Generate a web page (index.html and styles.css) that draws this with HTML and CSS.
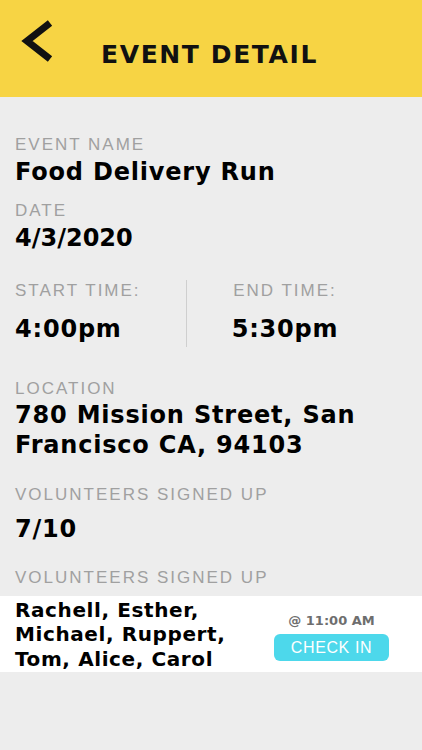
FILE: index.html
```html
<!DOCTYPE html>
<html lang="en">
<head>
    <meta charset="UTF-8">
    <meta name="viewport" content="width=device-width, initial-scale=1.0">
    <title>Event Detail</title>
    <link rel="stylesheet" href="styles.css">
</head>
<body>
    <!-- Header -->
    <div class="header">
        <div class="back">
            <svg width="40" height="46" viewBox="0 0 40 46">
                <polyline points="34,5 11,23 34,41" fill="none" stroke="#111" stroke-width="7" stroke-linejoin="miter"/>
            </svg>
        </div>
        <h1>EVENT DETAIL</h1>
        <div class="spacer"></div>
    </div>

    <main class="details">
        <div class="field field-name">
            <div class="label">EVENT NAME</div>
            <div class="value">Food Delivery Run</div>
        </div>

        <div class="field field-date">
            <div class="label">DATE</div>
            <div class="value value-date">4/3/2020</div>
        </div>

        <!-- Start / end time -->
        <div class="time-row">
            <div class="time-col">
                <div class="label">START TIME:</div>
                <div class="value">4:00pm</div>
            </div>
            <div class="divider"></div>
            <div class="time-col end">
                <div class="label">END TIME:</div>
                <div class="value">5:30pm</div>
            </div>
        </div>

        <div class="field field-location">
            <div class="label">LOCATION</div>
            <div class="value">780 Mission Street, San Francisco CA, 94103</div>
        </div>

        <div class="field field-count">
            <div class="label">VOLUNTEERS SIGNED UP</div>
            <div class="value">7/10</div>
        </div>

        <div class="label label-list">VOLUNTEERS SIGNED UP</div>
    </main>

    <div class="volunteer">
        <div class="names">Rachell, Esther, Michael, Ruppert, Tom, Alice, Carol</div>
        <div class="checkin">
            <div class="checkin-time">@ 11:00 AM</div>
            <div class="checkin-btn">CHECK IN</div>
        </div>
    </div>
</body>
</html>
```

FILE: styles.css
```css
/* General Styles */
body {
    margin: 0;
    padding: 0;
    background-color: #ededed;
    font-family: 'Liberation Sans', Arial, sans-serif;
    color: #000;
    height: 750px;
    overflow: hidden;
}

/* Header */
.header {
    display: flex;
    align-items: flex-start;
    height: 97px;
    background-color: #f7d444;
}

.back {
    width: 56px;
    padding: 18px 0 0 16px;
    box-sizing: border-box;
}

.back svg {
    display: block;
}

.spacer {
    width: 56px;
}

.header h1 {
    flex: 1;
    margin: 40px 0 0;
    padding-right: 3px;
    text-align: center;
    font-family: 'DejaVu Sans', sans-serif;
    font-size: 25px;
    line-height: 30px;
    letter-spacing: 1.6px;
    font-weight: bold;
    color: #111;
}

/* Details */
.details {
    padding: 38px 0 0 15px;
}

.label {
    font-size: 17px;
    line-height: 20px;
    letter-spacing: 2px;
    color: #a0a0a0;
    margin-bottom: 2px;
}

.value {
    font-family: 'DejaVu Sans', sans-serif;
    font-size: 24px;
    line-height: 30px;
    letter-spacing: 0.8px;
    font-weight: bold;
}

.value-date {
    letter-spacing: 0;
}

.field-name {
    margin-bottom: 14px;
}

.field-date {
    margin-bottom: 28px;
}

.field-location {
    margin-bottom: 25px;
}

.field-location .label {
    margin-bottom: 1px;
}

.field-count {
    margin-bottom: 24px;
}

.field-count .label {
    margin-bottom: 9px;
}

.label-list {
    margin-bottom: 8px;
}

/* Time row */
.time-row {
    display: flex;
    padding-right: 39px;
    margin-bottom: 35px;
}

.time-col {
    width: 171px;
}

.time-col .label {
    margin-bottom: 13px;
}

.time-col.end {
    flex: 1;
    width: auto;
    text-align: center;
}

.divider {
    width: 1px;
    margin: -1px 0 -3px;
    background-color: #cfcfcf;
}

/* Volunteer list */
.volunteer {
    display: flex;
    align-items: flex-start;
    background-color: #fff;
    padding: 2px 33px 1px 15px;
}

.names {
    flex: 1;
    font-family: 'DejaVu Sans', sans-serif;
    font-size: 20px;
    line-height: 24.3px;
    letter-spacing: 0.6px;
    font-weight: bold;
    padding-right: 20px;
}

.checkin {
    width: 115px;
    margin-top: 15px;
    text-align: center;
}

.checkin-time {
    font-family: 'DejaVu Sans', sans-serif;
    font-size: 13px;
    line-height: 16px;
    font-weight: bold;
    color: #6e6e6e;
    margin-bottom: 5px;
}

.checkin-btn {
    height: 27px;
    line-height: 27px;
    border-radius: 6px;
    background-color: #4dd8eb;
    color: #fff;
    font-size: 16px;
    letter-spacing: 0.6px;
}
```
